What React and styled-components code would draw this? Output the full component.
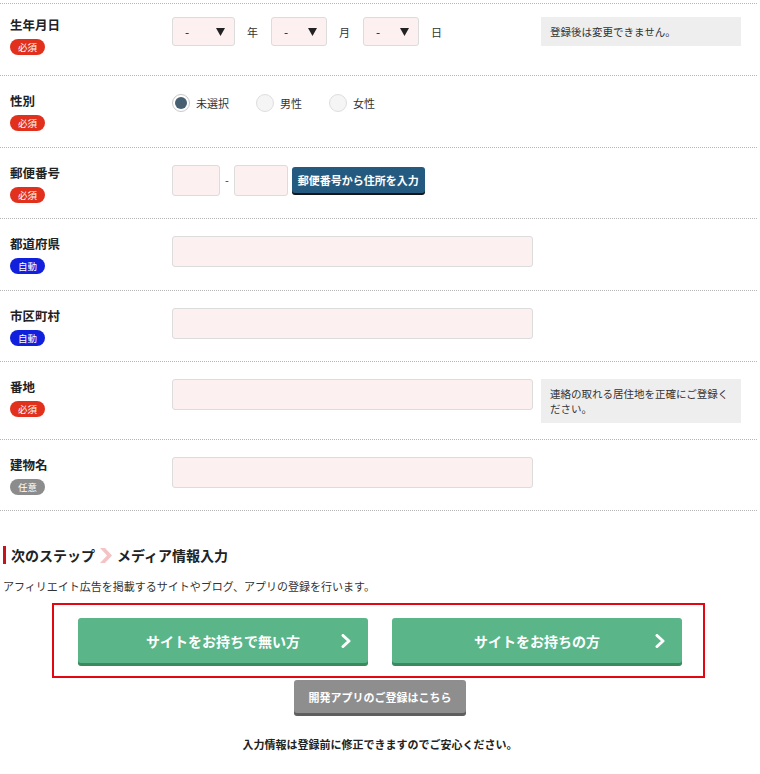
import React from "react";
import styled, { createGlobalStyle } from "styled-components";

const Global = createGlobalStyle`
  html, body { margin: 0; padding: 0; background: #fff; }
  body { font-family: "Noto Sans CJK JP", "Noto Sans", sans-serif; color: #222; }
  * { box-sizing: border-box; }
`;

const Page = styled.div`
  width: 760px;
  padding-top: 3px;
`;

const FormTable = styled.div`
  width: 757px;
  border-top: 1px dotted #b5b5b5;
`;

const Row = styled.div`
  display: grid;
  grid-template-columns: 172px 369px 200px;
  align-items: start;
  padding: ${(p) => (p.$first ? "12px 0 20px" : "16px 0 15.5px")};
  border-bottom: 1px dotted #b5b5b5;
`;

const LabelCell = styled.div`
  padding-left: 10px;
  display: flex;
  flex-direction: column;
  align-items: flex-start;
`;

const LabelText = styled.div`
  font-size: 12.5px;
  font-weight: 700;
  line-height: 18px;
  color: #222;
`;

const badgeColors = { req: "#e1311d", auto: "#1020dc", opt: "#8c8c8c" };

const Badge = styled.span`
  margin-top: 5px;
  width: 35px;
  height: 16px;
  border-radius: 8px;
  background: ${(p) => badgeColors[p.$kind]};
  color: #fff;
  font-size: 9.5px;
  line-height: 16px;
  text-align: center;
`;

const FieldCell = styled.div`
  margin-top: 1px;
  display: flex;
  align-items: center;
`;

const SelectBox = styled.div`
  width: ${(p) => p.$w}px;
  height: 29px;
  background: #fdf0f0;
  border: 1px solid #dcdcdc;
  border-radius: 3px;
  display: flex;
  align-items: center;
  justify-content: space-between;
  padding: 0 9px 0 12px;
  font-size: 12px;
  color: #222;
`;

const Unit = styled.span`
  font-size: 11px;
  color: #333;
  margin: 0 13px 0 12px;
`;

const RadioGroup = styled.div`
  margin-top: 2px;
  display: flex;
  align-items: center;
  gap: 27px;
`;

const RadioItem = styled.label`
  display: flex;
  align-items: center;
  gap: 6px;
  font-size: 11px;
  color: #333;
`;

const RadioCircle = styled.span`
  width: 18px;
  height: 18px;
  border-radius: 50%;
  border: 1px solid ${(p) => (p.$checked ? "#c9c9c9" : "#dedede")};
  background: ${(p) => (p.$checked ? "#fff" : "#f5f5f5")};
  display: flex;
  align-items: center;
  justify-content: center;
  &::after {
    content: "";
    width: 12px;
    height: 12px;
    border-radius: 50%;
    background: #465f71;
    display: ${(p) => (p.$checked ? "block" : "none")};
  }
`;

const TextBox = styled.div`
  width: ${(p) => p.$w}px;
  height: 31px;
  background: #fdf0f0;
  border: 1px solid #dcdcdc;
  border-radius: 3px;
`;

const Dash = styled.span`
  font-size: 11px;
  color: #333;
  margin: 0 5px;
`;

const LookupButton = styled.button`
  margin-left: 4px;
  height: 26px;
  padding: 0 6px;
  border: none;
  border-radius: 3px;
  background: #255a80;
  box-shadow: 0 2px 0 #151515;
  color: #fff;
  font-family: inherit;
  font-size: 11px;
  font-weight: 700;
  line-height: 24px;
`;

const Note = styled.div`
  margin-top: 1px;
  background: #eeeeee;
  padding: 7px 9px;
  font-size: 10.5px;
  line-height: 15px;
  color: #333;
`;

const Heading = styled.h2`
  margin: 35px 0 0 3px;
  display: flex;
  align-items: center;
  gap: 5px;
  height: 18px;
  border-left: 3px solid #c4141c;
  padding-left: 5px;
  font-size: 14px;
  font-weight: 700;
  color: #222;
  line-height: 18px;
`;

const Description = styled.p`
  margin: 14px 0 0 3px;
  font-size: 11px;
  line-height: 16px;
  color: #333;
`;

const Highlight = styled.div`
  margin: 9px 0 0 52px;
  width: 653px;
  height: 75px;
  border: 2px solid #e30613;
  padding: 13px 0 0 24px;
  display: flex;
  gap: 24px;
`;

const GreenButton = styled.button`
  position: relative;
  width: 290px;
  height: 45px;
  border: none;
  border-radius: 3px;
  background: #5ab588;
  box-shadow: 0 3px 0 #3b8a5d;
  color: #fff;
  font-family: inherit;
  font-size: 14px;
  font-weight: 700;
  text-align: center;
  padding: 0;
`;

const Chevron = styled.svg`
  position: absolute;
  right: 16px;
  top: 50%;
  transform: translateY(-50%);
`;

const Center = styled.div`
  display: flex;
  justify-content: center;
`;

const GrayButton = styled.button`
  margin-top: 2px;
  width: 172px;
  height: 33px;
  border: none;
  border-radius: 3px;
  background: #8e8e8e;
  box-shadow: 0 3px 0 #5e5e5e;
  color: #fff;
  font-family: inherit;
  font-size: 11px;
  font-weight: 700;
  padding: 0;
`;

const Footnote = styled.p`
  margin: 23px 0 0;
  text-align: center;
  font-size: 11px;
  font-weight: 700;
  line-height: 16px;
  color: #222;
`;

const Label = ({ text, kind }) => (
  <LabelCell>
    <LabelText>{text}</LabelText>
    <Badge $kind={kind}>{{ req: "必須", auto: "自動", opt: "任意" }[kind]}</Badge>
  </LabelCell>
);

const Select = ({ w }) => (
  <SelectBox $w={w}>
    <span>-</span>
    <svg width="9" height="8" viewBox="0 0 9 8">
      <polygon points="0,0 9,0 4.5,8" fill="#222" />
    </svg>
  </SelectBox>
);

const ChevronIcon = () => (
  <Chevron width="11" height="14" viewBox="0 0 11 14">
    <polyline points="2,1.5 8,7 2,12.5" fill="none" stroke="#fff" strokeWidth="3" strokeLinecap="round" strokeLinejoin="round" />
  </Chevron>
);

export default function App() {
  return (
    <Page>
      <Global />
      <FormTable>
        <Row $first>
          <Label text="生年月日" kind="req" />
          <FieldCell>
            <Select w={63} />
            <Unit>年</Unit>
            <Select w={56} />
            <Unit>月</Unit>
            <Select w={56} />
            <Unit>日</Unit>
          </FieldCell>
          <Note>登録後は変更できません。</Note>
        </Row>
        <Row>
          <Label text="性別" kind="req" />
          <RadioGroup>
            <RadioItem><RadioCircle $checked />未選択</RadioItem>
            <RadioItem><RadioCircle />男性</RadioItem>
            <RadioItem><RadioCircle />女性</RadioItem>
          </RadioGroup>
        </Row>
        <Row>
          <Label text="郵便番号" kind="req" />
          <FieldCell>
            <TextBox $w={48} />
            <Dash>-</Dash>
            <TextBox $w={54} />
            <LookupButton>郵便番号から住所を入力</LookupButton>
          </FieldCell>
        </Row>
        <Row>
          <Label text="都道府県" kind="auto" />
          <FieldCell><TextBox $w={361} /></FieldCell>
        </Row>
        <Row>
          <Label text="市区町村" kind="auto" />
          <FieldCell><TextBox $w={361} /></FieldCell>
        </Row>
        <Row>
          <Label text="番地" kind="req" />
          <FieldCell><TextBox $w={361} /></FieldCell>
          <Note>連絡の取れる居住地を正確にご登録ください。</Note>
        </Row>
        <Row>
          <Label text="建物名" kind="opt" />
          <FieldCell><TextBox $w={361} /></FieldCell>
        </Row>
      </FormTable>

      <Heading>
        <span>次のステップ</span>
        <svg width="12" height="15" viewBox="0 0 12 15">
          <polygon points="0,0 5,0 12,7.5 5,15 0,15 7,7.5" fill="#f3c4c6" />
        </svg>
        <span>メディア情報入力</span>
      </Heading>
      <Description>アフィリエイト広告を掲載するサイトやブログ、アプリの登録を行います。</Description>

      <Highlight>
        <GreenButton>
          サイトをお持ちで無い方
          <ChevronIcon />
        </GreenButton>
        <GreenButton>
          サイトをお持ちの方
          <ChevronIcon />
        </GreenButton>
      </Highlight>

      <Center>
        <GrayButton>開発アプリのご登録はこちら</GrayButton>
      </Center>

      <Footnote>入力情報は登録前に修正できますのでご安心ください。</Footnote>
    </Page>
  );
}
